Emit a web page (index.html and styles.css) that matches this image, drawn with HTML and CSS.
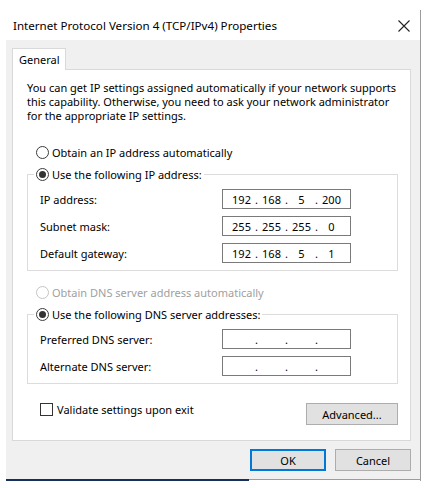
FILE: index.html
```html
<!DOCTYPE html>
<html lang="en">
<head>
    <meta charset="UTF-8">
    <meta name="viewport" content="width=device-width, initial-scale=1.0">
    <title>Internet Protocol Version 4 (TCP/IPv4) Properties</title>
    <link rel="stylesheet" href="styles.css">
</head>
<body>

<div class="window">
    <div class="titlebar">
        <span class="title">Internet Protocol Version 4 (TCP/IPv4) Properties</span>
        <svg class="close" width="12" height="12" viewBox="0 0 12 12">
            <path d="M0.5 0.5 L11.5 11.5 M11.5 0.5 L0.5 11.5" stroke="#222" stroke-width="1.1" fill="none"/>
        </svg>
    </div>

    <div class="client">
        <div class="tabs">
            <div class="tab">General</div>
        </div>

        <div class="panel">
            <p class="intro">You can get IP settings assigned automatically if your network supports<br>
                this capability. Otherwise, you need to ask your network administrator<br>
                for the appropriate IP settings.</p>

            <div class="option">
                <span class="radio"></span>
                <span>Obtain an IP address automatically</span>
            </div>

            <fieldset class="group">
                <legend class="option legend">
                    <span class="radio checked"></span>
                    <span>Use the following IP address:</span>
                </legend>
                <div class="row">
                    <span class="label">IP address:</span>
                    <div class="ipbox">
                        <span class="seg">192</span><span class="dot">.</span><span class="seg">168</span><span class="dot">.</span><span class="seg">5</span><span class="dot">.</span><span class="seg">200</span>
                    </div>
                </div>
                <div class="row">
                    <span class="label">Subnet mask:</span>
                    <div class="ipbox">
                        <span class="seg">255</span><span class="dot">.</span><span class="seg">255</span><span class="dot">.</span><span class="seg">255</span><span class="dot">.</span><span class="seg">0</span>
                    </div>
                </div>
                <div class="row">
                    <span class="label">Default gateway:</span>
                    <div class="ipbox">
                        <span class="seg">192</span><span class="dot">.</span><span class="seg">168</span><span class="dot">.</span><span class="seg">5</span><span class="dot">.</span><span class="seg">1</span>
                    </div>
                </div>
            </fieldset>

            <div class="option disabled">
                <span class="radio"></span>
                <span>Obtain DNS server address automatically</span>
            </div>

            <fieldset class="group">
                <legend class="option legend">
                    <span class="radio checked"></span>
                    <span>Use the following DNS server addresses:</span>
                </legend>
                <div class="row">
                    <span class="label">Preferred DNS server:</span>
                    <div class="ipbox">
                        <span class="seg"></span><span class="dot">.</span><span class="seg"></span><span class="dot">.</span><span class="seg"></span><span class="dot">.</span><span class="seg"></span>
                    </div>
                </div>
                <div class="row">
                    <span class="label">Alternate DNS server:</span>
                    <div class="ipbox">
                        <span class="seg"></span><span class="dot">.</span><span class="seg"></span><span class="dot">.</span><span class="seg"></span><span class="dot">.</span><span class="seg"></span>
                    </div>
                </div>
            </fieldset>

            <div class="bottom-row">
                <div class="check-option">
                    <span class="checkbox"></span>
                    <span>Validate settings upon exit</span>
                </div>
                <button class="btn advanced">Advanced...</button>
            </div>
        </div>

        <div class="footer">
            <button class="btn default">OK</button>
            <button class="btn">Cancel</button>
        </div>
    </div>
    <div class="edge"></div>
</div>

</body>
</html>
```

FILE: styles.css
```css
body {
    margin: 0;
    background-color: #ffffff;
    font-family: "Noto Sans", "Open Sans", sans-serif;
    font-size: 11px;
    color: #000;
}
.window {
    width: 414px;
    margin: 10px 0 0 6px;
    border-right: 1px solid #9c9c9c;
}
.titlebar {
    height: 30px;
    display: flex;
    align-items: center;
    justify-content: space-between;
    padding: 0 10px 0 7px;
    box-sizing: border-box;
    background-color: #fff;
}
.title {
    font-size: 11.6px;
}
.close {
    display: block;
    margin-top: 1px;
}
.client {
    background-color: #f0f0f0;
    padding: 8px 9px 8px 6px;
}
.tabs {
    display: flex;
    height: 21px;
}
.tab {
    width: 54px;
    box-sizing: border-box;
    border: 1px solid #d9d9d9;
    border-bottom: none;
    background-color: #fff;
    padding: 3px 0 0 6px;
    position: relative;
    z-index: 1;
    height: 22px;
}
.panel {
    background-color: #fff;
    border: 1px solid #d9d9d9;
    height: 370px;
    padding: 0 12px 0 14px;
}
.intro {
    margin: 11px 0 0 0;
    line-height: 14px;
}
.option {
    display: flex;
    align-items: center;
    gap: 3px;
    height: 16px;
    margin: 21px 0 0 9px;
}
.option.disabled {
    color: #a0a0a0;
    margin-top: 13px;
}
.radio {
    width: 11px;
    height: 11px;
    border: 1px solid #3c3c3c;
    border-radius: 50%;
    display: flex;
    align-items: center;
    justify-content: center;
    box-sizing: content-box;
    background: #fff;
}
.radio.checked::after {
    content: "";
    width: 7px;
    height: 7px;
    border-radius: 50%;
    background-color: #333;
}
.disabled .radio {
    border-color: #c4c4c4;
}
.group {
    margin: 6px 0 0 0;
    border: 1px solid #dcdcdc;
    padding: 7px 0 7px 12px;
    display: flex;
    flex-direction: column;
    gap: 7px;
    min-width: 0;
}
.legend {
    margin: 0 0 0 -6px;
    padding: 0 2px;
}
.row {
    display: flex;
    align-items: center;
    height: 20px;
}
.label {
    width: 182px;
}
.ipbox {
    width: 129px;
    height: 20px;
    box-sizing: border-box;
    border: 1px solid #7a7a7a;
    display: flex;
    align-items: center;
    padding-left: 8px;
}
.seg {
    width: 21px;
    text-align: center;
}
.dot {
    width: 9px;
    text-align: center;
}
.bottom-row {
    display: flex;
    justify-content: space-between;
    align-items: flex-start;
    margin-top: 19px;
    padding-left: 13px;
}
.check-option {
    display: flex;
    align-items: center;
    gap: 4px;
    height: 13px;
}
.checkbox {
    width: 11px;
    height: 11px;
    border: 1px solid #333;
    background: #fff;
}
.btn {
    font-family: inherit;
    font-size: 11px;
    color: #000;
    background-color: #e1e1e1;
    border: 1px solid #adadad;
    padding: 0;
    height: 22px;
}
.advanced {
    width: 92px;
}
.footer {
    display: flex;
    justify-content: flex-end;
    gap: 9px;
    padding-top: 8px;
}
.footer .btn {
    width: 76px;
}
.btn.default {
    border: 2px solid #0078d7;
}
.edge {
    height: 2px;
    background: linear-gradient(to right, #16305e 243px, transparent 243px),
                linear-gradient(to bottom, #9c9c9c 1px, transparent 1px);
}
```
